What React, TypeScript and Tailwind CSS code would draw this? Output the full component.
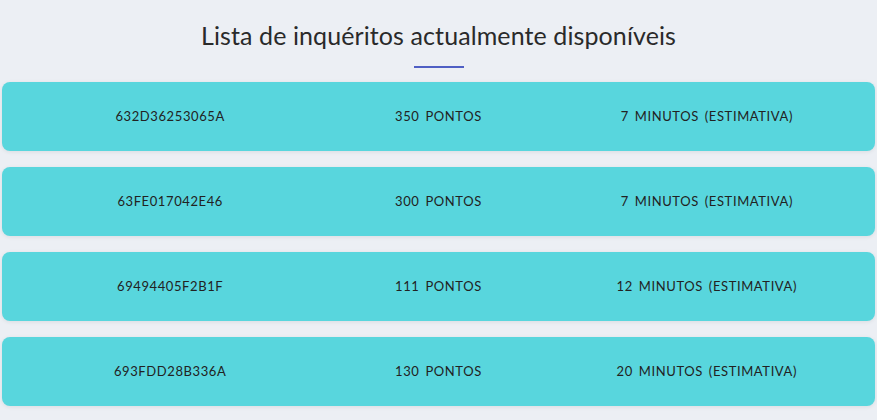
const inqueritos = [
  { id: '632D36253065A', pontos: 350, minutos: 7 },
  { id: '63FE017042E46', pontos: 300, minutos: 7 },
  { id: '69494405F2B1F', pontos: 111, minutos: 12 },
  { id: '693FDD28B336A', pontos: 130, minutos: 20 },
];

function App() {
  return (
    <div className="min-h-screen bg-[#eceff4] font-['Lato','Liberation_Sans',sans-serif] text-[#222]">
      <div className="flex flex-col items-center pt-[19px]">
        <h1 className="text-[25px] leading-[32px] tracking-[0.1px] text-[#2a2a2a]">
          Lista de inquéritos actualmente disponíveis
        </h1>
        <div className="mt-[15px] h-[2px] w-[50px] bg-[#4f5fc4]" />
      </div>
      <main className="mt-[14px] flex flex-col gap-4 px-[2px]">
        {inqueritos.map((q) => (
          <div
            key={q.id}
            className="grid h-[69px] grid-cols-3 items-center rounded-lg bg-[#58d6dd] px-[34px] text-[13px] uppercase tracking-[0.6px] [word-spacing:2px] shadow-[0_1px_4px_rgba(0,0,0,0.08)]"
          >
            <span className="text-center">{q.id}</span>
            <span className="text-center">{q.pontos} Pontos</span>
            <span className="text-center">{q.minutos} Minutos (Estimativa)</span>
          </div>
        ))}
      </main>
    </div>
  );
}

export default App;
